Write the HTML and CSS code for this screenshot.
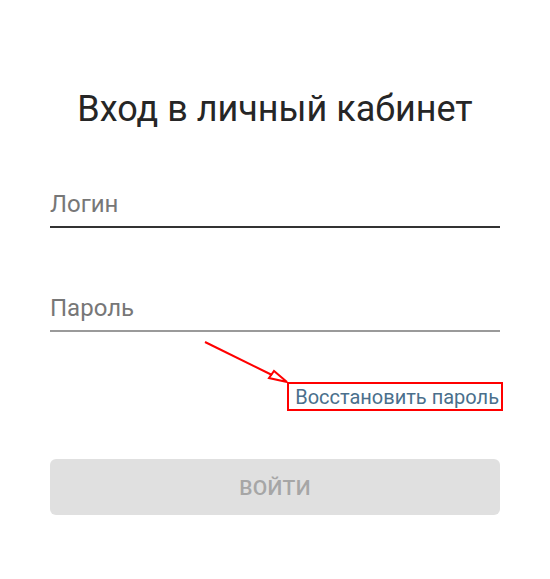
FILE: index.html
```html
<!DOCTYPE html>
<html lang="ru">
<head>
<meta charset="utf-8">
<title>Вход в личный кабинет</title>
<link rel="stylesheet" href="styles.css">
</head>
<body>
<main class="login">
  <h1 class="login-title">Вход в личный кабинет</h1>
  <form class="login-form">
    <label class="field field-active">
      <input class="field-input" type="text" placeholder="Логин">
    </label>
    <label class="field">
      <input class="field-input" type="password" placeholder="Пароль">
    </label>
    <div class="restore-row">
      <a class="restore-link" href="#">Восстановить пароль</a>
      <svg class="annot-arrow" width="100" height="50" viewBox="0 0 100 50">
        <line x1="5" y1="4" x2="72" y2="37" stroke="#ff0000" stroke-width="2"/>
        <polygon points="87,44 69,40 74,33" fill="none" stroke="#ff0000" stroke-width="2" stroke-linejoin="miter"/>
      </svg>
    </div>
    <button class="submit" type="button" disabled>ВОЙТИ</button>
  </form>
</main>
</body>
</html>
```
FILE: styles.css
```css
html, body {
  margin: 0;
  padding: 0;
  background: #ffffff;
}
body {
  font-family: Roboto, "Liberation Sans", Arial, sans-serif;
  color: #222222;
}
.login {
  width: 450px;
  margin: 0 auto;
  padding-top: 89px;
}
.login-title {
  margin: 0;
  font-size: 36px;
  line-height: 40px;
  font-weight: 400;
  text-align: center;
  color: #262626;
}
.login-form {
  display: flex;
  flex-direction: column;
  margin-top: 53px;
}
.field {
  display: block;
  border-bottom: 2px solid #9a9a9a;
  height: 44px;
}
.field + .field {
  margin-top: 58px;
}
.field-active {
  border-bottom-color: #333333;
}
.field-input {
  display: block;
  width: 100%;
  box-sizing: border-box;
  border: 0;
  outline: 0;
  padding: 0;
  height: 44px;
  font-family: Roboto, "Liberation Sans", Arial, sans-serif;
  font-size: 24px;
  color: #222222;
  background: transparent;
}
.field-input::placeholder {
  color: #777777;
  opacity: 1;
}
.restore-row {
  position: relative;
  display: flex;
  justify-content: flex-end;
  margin-top: 50px;
  margin-right: -3px;
}
.restore-link {
  display: inline-block;
  border: 2px solid #ff0000;
  padding: 1px 2px 0 6px;
  font-size: 20px;
  line-height: 24px;
  color: #4a6f8c;
  text-decoration: none;
}
.annot-arrow {
  position: absolute;
  left: 150px;
  top: -44px;
  overflow: visible;
}
.submit {
  margin-top: 48px;
  height: 56px;
  padding-top: 2px;
  border: 0;
  border-radius: 6px;
  background: #e0e0e0;
  color: #a6a6a6;
  font-family: Roboto, "Liberation Sans", Arial, sans-serif;
  font-size: 21px;
  font-weight: 500;
  letter-spacing: 0.3px;
}
```
